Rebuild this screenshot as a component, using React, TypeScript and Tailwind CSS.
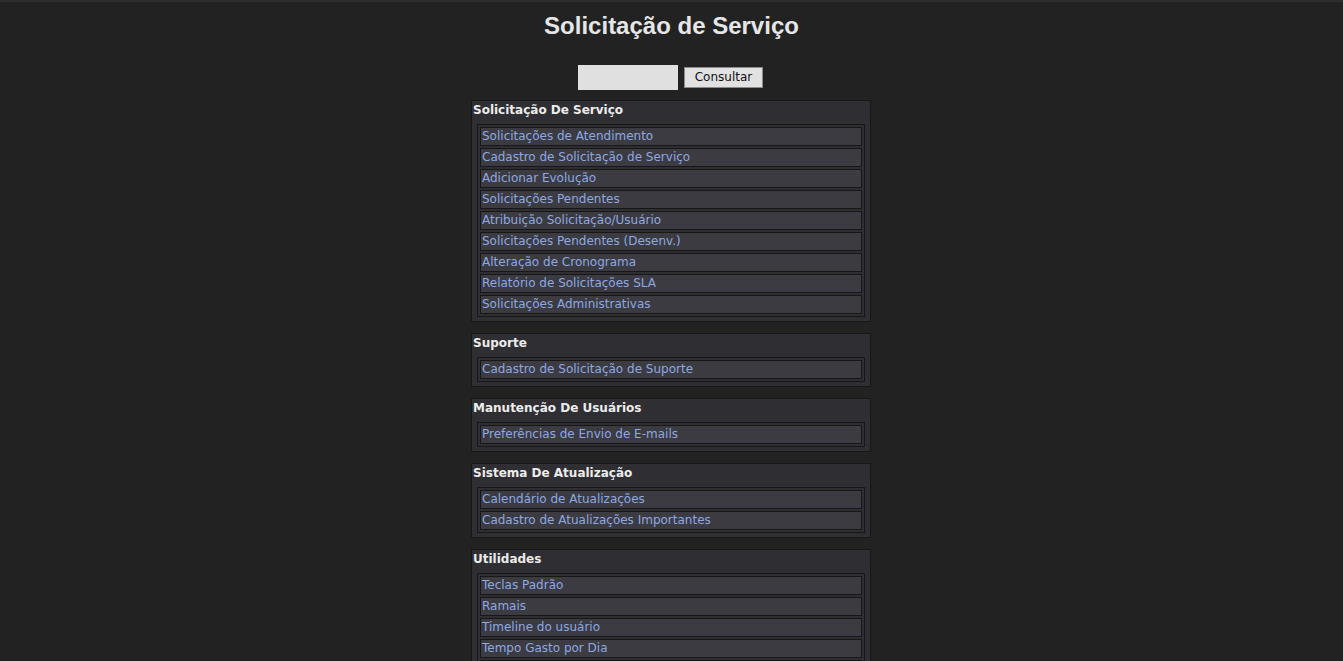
import React from "react";

const sections: { title: string; items: string[] }[] = [
  {
    title: "Solicitação De Serviço",
    items: [
      "Solicitações de Atendimento",
      "Cadastro de Solicitação de Serviço",
      "Adicionar Evolução",
      "Solicitações Pendentes",
      "Atribuição Solicitação/Usuário",
      "Solicitações Pendentes (Desenv.)",
      "Alteração de Cronograma",
      "Relatório de Solicitações SLA",
      "Solicitações Administrativas",
    ],
  },
  { title: "Suporte", items: ["Cadastro de Solicitação de Suporte"] },
  { title: "Manutenção De Usuários", items: ["Preferências de Envio de E-mails"] },
  {
    title: "Sistema De Atualização",
    items: ["Calendário de Atualizações", "Cadastro de Atualizações Importantes"],
  },
  {
    title: "Utilidades",
    items: [
      "Teclas Padrão",
      "Ramais",
      "Timeline do usuário",
      "Tempo Gasto por Dia",
      "Relatório de Horas",
    ],
  },
];

export default function App() {
  return (
    <div
      className="min-h-screen bg-[#222222] border-t-2 border-[#2d2d2d] flex flex-col items-center"
      style={{ fontFamily: "'DejaVu Sans', Tahoma, Verdana, sans-serif" }}
    >
      <h1
        className="mt-[10px] text-[24px] leading-[28px] font-bold text-[#e6e6e6]"
        style={{ fontFamily: "'Liberation Sans', Arial, sans-serif" }}
      >
        Solicitação de Serviço
      </h1>
      <div className="mt-[25px] mr-[2px] flex items-center gap-[6px]">
        <input
          type="text"
          className="w-[100px] h-[25px] bg-[#e0e0e0] outline-none border-0"
        />
        <button className="w-[79px] h-[21px] bg-[#e1e1e1] border border-[#8a8a8a] text-[12px] leading-[19px] text-[#111]">
          Consultar
        </button>
      </div>
      <div className="mt-[10px] mr-[1px] flex flex-col gap-[11px] pb-4">
        {sections.map((s) => (
          <div
            key={s.title}
            className="w-[400px] border border-[#171717] bg-[#2f2f33] px-[5px] pb-[4px]"
          >
            <div className="h-[23px] -ml-[4px] text-[12px] leading-[18px] font-bold text-[#ececec]">
              {s.title}
            </div>
            <div className="border border-[#171717] p-[2px] flex flex-col gap-[2px]">
              {s.items.map((it) => (
                <div
                  key={it}
                  className="h-[19px] border border-[#171717] bg-[#3b3b41] pl-[1px] text-[12px] leading-[17px] text-[#8ea8e2] whitespace-nowrap"
                >
                  {it}
                </div>
              ))}
            </div>
          </div>
        ))}
      </div>
    </div>
  );
}
